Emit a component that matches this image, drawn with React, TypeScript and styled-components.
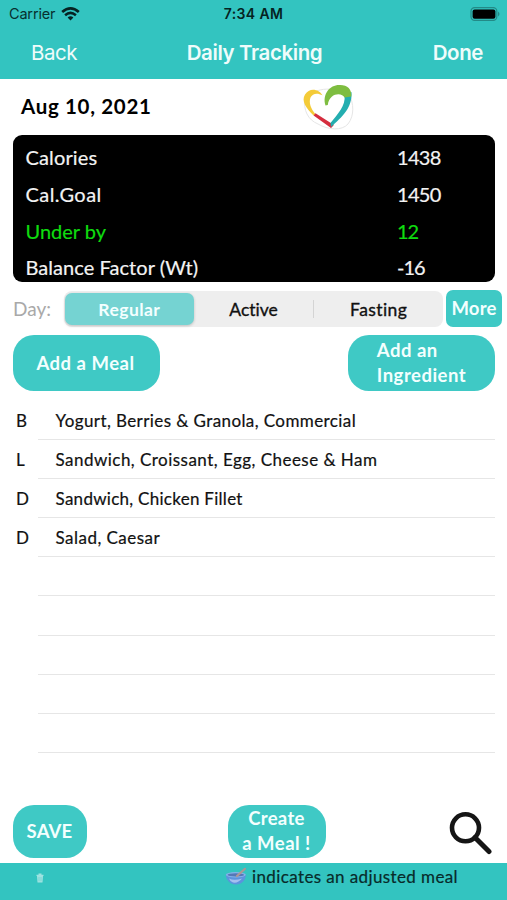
import React from "react";
import styled, { createGlobalStyle } from "styled-components";

const GlobalStyle = createGlobalStyle`
  * { box-sizing: border-box; }
  body { margin: 0; background: #fff; }
  button { border: 0; padding: 0; background: none; font: inherit; color: inherit; cursor: pointer; }
`;

const teal = "#33c4c0";
const buttonTeal = "#3fc9c5";

const Screen = styled.div`
  width: 507px;
  height: 900px;
  display: flex;
  flex-direction: column;
  overflow: hidden;
  background: #fff;
  color: #111;
  font-family: Lato, "Liberation Sans", sans-serif;
  font-variant-ligatures: none;
  white-space: nowrap;
`;

const Label = styled.span<{ $spacing?: number; $stroke?: number }>`
  font-variant-ligatures: none;
  letter-spacing: ${(p) => p.$spacing ?? 0}px;
  -webkit-text-stroke: ${(p) => p.$stroke ?? 0}px currentColor;
`;

const Header = styled.header`
  height: 79px;
  flex: none;
  background: ${teal};
  font-family: Inter, "Liberation Sans", sans-serif;
`;

const StatusBar = styled.div`
  height: 27px;
  padding: 0 7px 0 9px;
  display: grid;
  grid-template-columns: 1fr auto 1fr;
  align-items: center;
  font-size: 14.5px;
  color: #07302f;
`;

const Carrier = styled.div`
  display: flex;
  align-items: center;
  gap: 6px;
`;

const Clock = styled.div`
  margin-right: 2px;
  font-size: 14px;
  font-weight: 600;
  color: #052322;
`;

const BatterySlot = styled.div`
  display: flex;
  justify-content: flex-end;
`;

const NavBar = styled.nav`
  height: 52px;
  padding: 0 24px 2px 31px;
  display: grid;
  grid-template-columns: 1fr auto 1fr;
  align-items: center;
  color: #effcfb;
  font-size: 20.5px;
`;

const NavButton = styled.button<{ $strong?: boolean }>`
  justify-self: ${(p) => (p.$strong ? "end" : "start")};
  font-weight: ${(p) => (p.$strong ? 600 : 400)};
`;

const Title = styled.h1`
  margin: 0 5px 0 0;
  font-size: 20.5px;
  font-weight: 600;
`;

const DateRow = styled.div`
  height: 56px;
  flex: none;
  padding: 0 0 3px 21px;
  display: flex;
  align-items: center;
`;

const DateText = styled.div`
  width: 279px;
  padding-top: 1px;
  font-size: 20.5px;
  font-weight: 700;
  color: #000;
`;

const Summary = styled.section`
  height: 147px;
  flex: none;
  margin: 0 12px 0 13px;
  padding: 4px 12px 0 12.5px;
  border-radius: 9px;
  background: #000;
  overflow: hidden;
`;

const SummaryRow = styled.div<{ $highlight?: boolean }>`
  height: 36.7px;
  display: grid;
  grid-template-columns: 371.5px 1fr;
  align-items: center;
  font-size: 20px;
  color: ${(p) => (p.$highlight ? "#0fdc0f" : "#f3f3f3")};
`;

const DayRow = styled.div`
  height: 53px;
  flex: none;
  padding: 8px 5px 8px 13px;
  display: flex;
  align-items: center;
`;

const DayLabel = styled.div`
  width: 51px;
  font-size: 19px;
  color: #a9a9a9;
`;

const Segments = styled.div`
  width: 379px;
  height: 36px;
  margin-right: 3px;
  padding: 2px 0 2px 1px;
  display: flex;
  align-items: center;
  border-radius: 8px;
  background: #eee;
`;

const Segment = styled.button<{ $width: number; $selected?: boolean }>`
  width: ${(p) => p.$width}px;
  height: 32px;
  padding-top: 1px;
  border-radius: 7px;
  font-size: 17.5px;
  font-weight: ${(p) => (p.$selected ? 700 : 400)};
  color: ${(p) => (p.$selected ? "#f4ffff" : "#111")};
  background: ${(p) => (p.$selected ? "#75d3d2" : "transparent")};
  box-shadow: ${(p) => (p.$selected ? "0 1px 3px rgba(0,0,0,.2)" : "none")};
`;

const Divider = styled.div`
  width: 1px;
  height: 18px;
  background: #d4d4d4;
`;

const ActionButton = styled.button<{ $width: number; $height: number; $radius: number }>`
  width: ${(p) => p.$width}px;
  height: ${(p) => p.$height}px;
  border-radius: ${(p) => p.$radius}px;
  display: flex;
  flex-direction: column;
  align-items: center;
  justify-content: center;
  background: ${buttonTeal};
  color: #f3fffe;
  font-size: 18.5px;
  font-weight: 700;
  line-height: 25px;
  text-align: center;
`;

const AddMealButton = styled(ActionButton)`
  padding: 1px 2px 0 0;
`;

const SaveButton = styled(ActionButton)`
  padding-right: 1px;
`;

const CreateButton = styled(ActionButton)`
  padding: 0 1px 2px 0;
`;

const TwoLine = styled.span<{ $left?: boolean }>`
  display: flex;
  flex-direction: column;
  align-items: ${(p) => (p.$left ? "flex-start" : "center")};
`;

const AddRow = styled.div`
  height: 56px;
  flex: none;
  padding: 0 12px 0 13px;
  display: flex;
  justify-content: space-between;
`;

const MealList = styled.ul`
  margin: 10px 0 0;
  padding: 0;
  flex: 1;
  list-style: none;
`;

const MealRow = styled.li`
  height: 39.1px;
  display: grid;
  grid-template-columns: 22px 1fr;
  grid-template-rows: 39.1px;
  padding: 0 12px 0 16px;
  font-size: 17px;
  line-height: 40px;
`;

const MealName = styled.div`
  height: 39.1px;
  padding-left: 17.5px;
  border-bottom: 1px solid #e6e6e6;
`;

const BottomBar = styled.div`
  height: 58px;
  flex: none;
  padding: 0 14px 5px 13px;
  display: flex;
  align-items: center;
  justify-content: space-between;
`;

const CreateSlot = styled.div`
  margin-left: 18px;
`;

const SearchButton = styled.button`
  width: 44px;
  height: 44px;
  margin-top: 2px;
`;

const Footer = styled.footer`
  height: 37px;
  flex: none;
  padding: 0 49px 0 36px;
  display: flex;
  align-items: flex-start;
  justify-content: space-between;
  background: ${teal};
`;

const TrashSlot = styled.div`
  margin-top: 10px;
  line-height: 0;
`;

const Legend = styled.div`
  display: flex;
  align-items: center;
  gap: 5px;
  height: 26px;
  font-size: 17px;
  color: #082b2a;
`;

const WifiIcon = () => (
  <svg width="19" height="14" viewBox="0 0 19 14">
    <path d="M1.2 5.1Q9.5-2.2 17.8 5.1" fill="none" stroke="#062322" strokeWidth="2.7" />
    <path d="M4.1 8.2Q9.5 3.5 14.9 8.2" fill="none" stroke="#062322" strokeWidth="2.5" />
    <path d="M6.6 10.5Q9.5 8 12.4 10.5L9.5 13.5Z" fill="#062322" />
  </svg>
);

const BatteryIcon = () => (
  <svg width="30" height="14" viewBox="0 0 30 14">
    <rect x="1" y="0.6" width="25.8" height="12.8" rx="3.6" fill="none" stroke="#238a87" strokeWidth="1.2" />
    <rect x="2.6" y="2.4" width="22.8" height="9.4" rx="2" fill="#000" />
    <path d="M28 4.5Q31 7 28 9.5Z" fill="#238a87" />
  </svg>
);

const HeartLogo = () => (
  <svg width="56" height="50" viewBox="0 0 56 50">
    <path d="M5 17C3 29 8 39 18 43C28 49 42 50 48 43C55 34 53 22 50 15C41 8 20 3 5 17Z" fill="#fff" stroke="#e6e6e6" strokeWidth="1" />
    <path d="M13.6 34.6C6 27 1 20 5 13.500C9.500 6 19 8 22.600 14.300C17 11.500 12.500 12.500 10.500 16.500C8.500 22 11 28 15.600 33.200Z" fill="#f4cb38" />
    <path d="M13.600 34.400L15.500 32.200L30.800 42L32.800 40.200L33.500 44.500L31 47Z" fill="#d52d3e" />
    <path d="M31 46L30.500 42C37.500 33 46 25 44.500 14L51.500 11C52.500 27 42 36 31 46Z" fill="#24aeb0" />
    <path d="M25.500 24.500C22 13 30 4 39 4C47 3.500 52 8 51.300 15.500L44.500 16.500C42.500 11.500 29.500 11 27.800 24Z" fill="#7ebd40" />
  </svg>
);

const SearchIcon = () => (
  <svg width="44" height="44" viewBox="0 0 44 44">
    <circle cx="16.500" cy="16.800" r="13.500" fill="none" stroke="#151515" strokeWidth="4.600" />
    <path d="M26 26.500L40 40.500" stroke="#151515" strokeWidth="5" strokeLinecap="round" />
  </svg>
);

const TrashIcon = () => (
  <svg width="8" height="10" viewBox="0 0 8 10">
    <path d="M0.500 1.800H2.500V0.500H5.500V1.800H7.500V3H7L6.500 9.500H1.500L1 3H0.500Z" fill="#9fe3e1" />
    <path d="M3 4V8.200M5 4V8.200" stroke="#5fcdca" strokeWidth="0.600" />
  </svg>
);

const BowlIcon = () => (
  <svg width="22" height="18" viewBox="0 0 22 18">
    <path d="M0.800 7.500C1 13 5 17.500 11 17.500S20.700 13 20.800 7.500Z" fill="#5c93dd" />
    <path d="M4 11.500Q9 14 17 11.500Q13 16.500 8 15.500Q5 14.500 4 11.500Z" fill="#a5bff0" />
    <ellipse cx="10.800" cy="7.800" rx="10" ry="2.700" fill="#86b2ea" />
    <ellipse cx="10.800" cy="7.900" rx="8.300" ry="1.600" fill="#5577b5" />
    <path d="M12 9L20 1.800" stroke="#ad9795" strokeWidth="2.200" strokeLinecap="round" />
  </svg>
);

const summary = [
  { name: "Calories", spacing: 0.14, value: "1438", valueSpacing: -0.7 },
  { name: "Cal.Goal", spacing: 0.42, value: "1450", valueSpacing: -0.7 },
  { name: "Under by", spacing: 0, value: "12", valueSpacing: -1.1, highlight: true },
  { name: "Balance Factor (Wt)", spacing: 0.06, value: "-16", valueSpacing: -1 },
];

const meals = [
  { code: "B", name: "Yogurt, Berries & Granola, Commercial", spacing: 0.41 },
  { code: "L", name: "Sandwich, Croissant, Egg, Cheese & Ham", spacing: 0.47 },
  { code: "D", name: "Sandwich, Chicken Fillet", spacing: 0.28 },
  { code: "D", name: "Salad, Caesar", spacing: 0.47 },
  ...Array.from({ length: 5 }, () => ({ code: "", name: "", spacing: 0 })),
];

export default function App() {
  return (
    <>
      <GlobalStyle />
      <Screen>
        <Header>
          <StatusBar>
            <Carrier>
              <Label $spacing={-0.18}>Carrier</Label>
              <WifiIcon />
            </Carrier>
            <Clock><Label $spacing={0.4}>7:34 AM</Label></Clock>
            <BatterySlot><BatteryIcon /></BatterySlot>
          </StatusBar>
          <NavBar>
            <NavButton><Label $spacing={-0.5}>Back</Label></NavButton>
            <Title><Label $spacing={-0.4}>Daily Tracking</Label></Title>
            <NavButton $strong><Label $spacing={-0.4}>Done</Label></NavButton>
          </NavBar>
        </Header>

        <DateRow>
          <DateText><Label $spacing={0.67}>Aug 10, 2021</Label></DateText>
          <HeartLogo />
        </DateRow>

        <Summary>
          {summary.map((row) => (
            <SummaryRow key={row.name} $highlight={row.highlight}>
              <Label $spacing={row.spacing} $stroke={0.2}>{row.name}</Label>
              <Label $spacing={row.valueSpacing} $stroke={0.2}>{row.value}</Label>
            </SummaryRow>
          ))}
        </Summary>

        <DayRow>
          <DayLabel><Label>Day:</Label></DayLabel>
          <Segments>
            <Segment $width={129} $selected><Label $spacing={0.44}>Regular</Label></Segment>
            <Segment $width={120}><Label $stroke={0.35}>Active</Label></Segment>
            <Divider />
            <Segment $width={129}><Label $spacing={0.42} $stroke={0.35}>Fasting</Label></Segment>
          </Segments>
          <ActionButton $width={56} $height={37} $radius={7}><Label $spacing={0.18}>More</Label></ActionButton>
        </DayRow>

        <AddRow>
          <AddMealButton $width={147} $height={55.5} $radius={21}><Label $spacing={0.5}>Add a Meal</Label></AddMealButton>
          <ActionButton $width={147} $height={55.5} $radius={21}>
            <TwoLine $left>
              <Label $spacing={0.49}>Add an</Label>
              <Label $spacing={0.5}>Ingredient</Label>
            </TwoLine>
          </ActionButton>
        </AddRow>

        <MealList>
          {meals.map((meal, i) => (
            <MealRow key={i}>
              <Label $stroke={0.2}>{meal.code}</Label>
              <MealName><Label $spacing={meal.spacing} $stroke={0.2}>{meal.name}</Label></MealName>
            </MealRow>
          ))}
        </MealList>

        <BottomBar>
          <SaveButton $width={74} $height={53} $radius={21}><Label $spacing={0.16}>SAVE</Label></SaveButton>
          <CreateSlot>
            <CreateButton $width={98} $height={53} $radius={21}>
              <TwoLine>
                <Label $spacing={0.34}>Create</Label>
                <Label $spacing={0.5}>a Meal !</Label>
              </TwoLine>
            </CreateButton>
          </CreateSlot>
          <SearchButton aria-label="Search"><SearchIcon /></SearchButton>
        </BottomBar>

        <Footer>
          <TrashSlot><TrashIcon /></TrashSlot>
          <Legend>
            <BowlIcon />
            <Label $spacing={0.39} $stroke={0.2}>indicates an adjusted meal</Label>
          </Legend>
        </Footer>
      </Screen>
    </>
  );
}
